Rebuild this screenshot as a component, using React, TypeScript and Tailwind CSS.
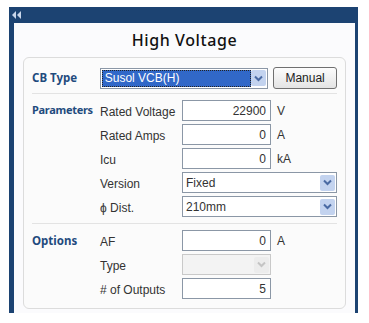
function Chevron({ disabled }: { disabled?: boolean }) {
  return (
    <div
      className={
        'flex h-[16px] w-[15px] items-center justify-center rounded-[2px] ' +
        (disabled ? 'bg-[#ececec]' : 'bg-[#c3d3ef]')
      }
    >
      <svg width="9" height="7" viewBox="0 0 9 7">
        <path
          d="M1 1.5 L4.5 5 L8 1.5"
          fill="none"
          stroke={disabled ? '#c4c4c4' : '#4a6aa3'}
          strokeWidth="2"
        />
      </svg>
    </div>
  )
}

function TextField({ value, unit }: { value: string; unit?: string }) {
  return (
    <div className="flex items-center">
      <div className="flex h-[21px] w-[89px] items-center justify-end border border-[#8b97a6] bg-white pr-[4px] text-[12px] text-[#333]">
        {value}
      </div>
      {unit && <span className="ml-[6px] text-[12px] text-[#333]">{unit}</span>}
    </div>
  )
}

function SelectField({ value, wide, disabled }: { value: string; wide?: boolean; disabled?: boolean }) {
  return (
    <div
      className={
        'flex h-[21px] items-center justify-between border pl-[3px] pr-[1px] text-[12px] ' +
        (wide ? 'w-[155px] ' : 'w-[89px] ') +
        (disabled ? 'border-[#c9c9c9] bg-[#f3f3f3]' : 'border-[#8b97a6] bg-white text-[#333]')
      }
    >
      <span>{value}</span>
      <Chevron disabled={disabled} />
    </div>
  )
}

function Row({ label, children }: { label: string; children: React.ReactNode }) {
  return (
    <div className="flex h-[24px] items-start">
      <span className="w-[82px] pt-[3px] text-[12px] text-[#333]">{label}</span>
      {children}
    </div>
  )
}

export default function App() {
  return (
    <div
      className="h-[323px] w-[369px] bg-white pl-[9px] pt-[7px]"
      style={{ fontFamily: '"Liberation Sans", Arial, sans-serif' }}
    >
      <div className="flex h-[306px] w-[349px] flex-col bg-[#1c4372]">
        <div className="flex h-[16px] items-center pl-[3px]">
          <svg width="9" height="8" viewBox="0 0 9 8">
            <path d="M4 0 L0 4 L4 8 Z M9 0 L5 4 L9 8 Z" fill="#c9d6ea" />
          </svg>
        </div>
        <div className="ml-[5px] mr-[3px] flex flex-1 flex-col bg-[#fbfbfd]">
          <div className="flex h-[34px] items-center justify-center font-['Noto_Sans',sans-serif] text-[16px] font-medium tracking-[0.6px] text-[#111]">
            High Voltage
          </div>
          <div className="mx-[9px] mb-[4px] flex-1 rounded-[6px] border border-[#dcdcdc] bg-[#fbfbfb] px-[8px] pt-[9px]">
            <div className="flex h-[22px] items-center">
              <span className="w-[68px] font-['Noto_Sans',sans-serif] text-[11.5px] font-bold text-[#1f4b7e]">CB Type</span>
              <div className="flex h-[21px] w-[169px] items-center justify-between border border-[#8b97a6] bg-white p-[1px]">
                <span className="flex h-full flex-1 items-center border border-dotted border-[#222] bg-[#3168c8] pl-[2px] text-[12px] text-white">
                  Susol VCB(H)
                </span>
                <Chevron />
              </div>
              <button className="ml-[5px] h-[22px] w-[64px] rounded-[3px] border border-[#707070] bg-gradient-to-b from-[#fdfdfd] to-[#e4e4e4] text-[12px] text-[#222]">
                Manual
              </button>
            </div>
            <div className="mt-[4px] h-px bg-[#e3e3e3]" />
            <div className="mt-[6px] flex">
              <span className="w-[68px] pt-[2px] font-['Noto_Sans',sans-serif] text-[11px] font-bold tracking-[-0.3px] text-[#1f4b7e]">Parameters</span>
              <div className="flex flex-col">
                <Row label="Rated Voltage"><TextField value="22900" unit="V" /></Row>
                <Row label="Rated Amps"><TextField value="0" unit="A" /></Row>
                <Row label="Icu"><TextField value="0" unit="kA" /></Row>
                <Row label="Version"><SelectField value="Fixed" wide /></Row>
                <Row label="ϕ Dist."><SelectField value="210mm" wide /></Row>
              </div>
            </div>
            <div className="mt-[3px] h-px bg-[#e3e3e3]" />
            <div className="mt-[6px] flex">
              <span className="w-[68px] pt-[2px] font-['Noto_Sans',sans-serif] text-[11.5px] font-bold text-[#1f4b7e]">Options</span>
              <div className="flex flex-col">
                <Row label="AF"><TextField value="0" unit="A" /></Row>
                <Row label="Type"><SelectField value="" disabled /></Row>
                <Row label="# of Outputs"><TextField value="5" /></Row>
              </div>
            </div>
          </div>
        </div>
      </div>
    </div>
  )
}
